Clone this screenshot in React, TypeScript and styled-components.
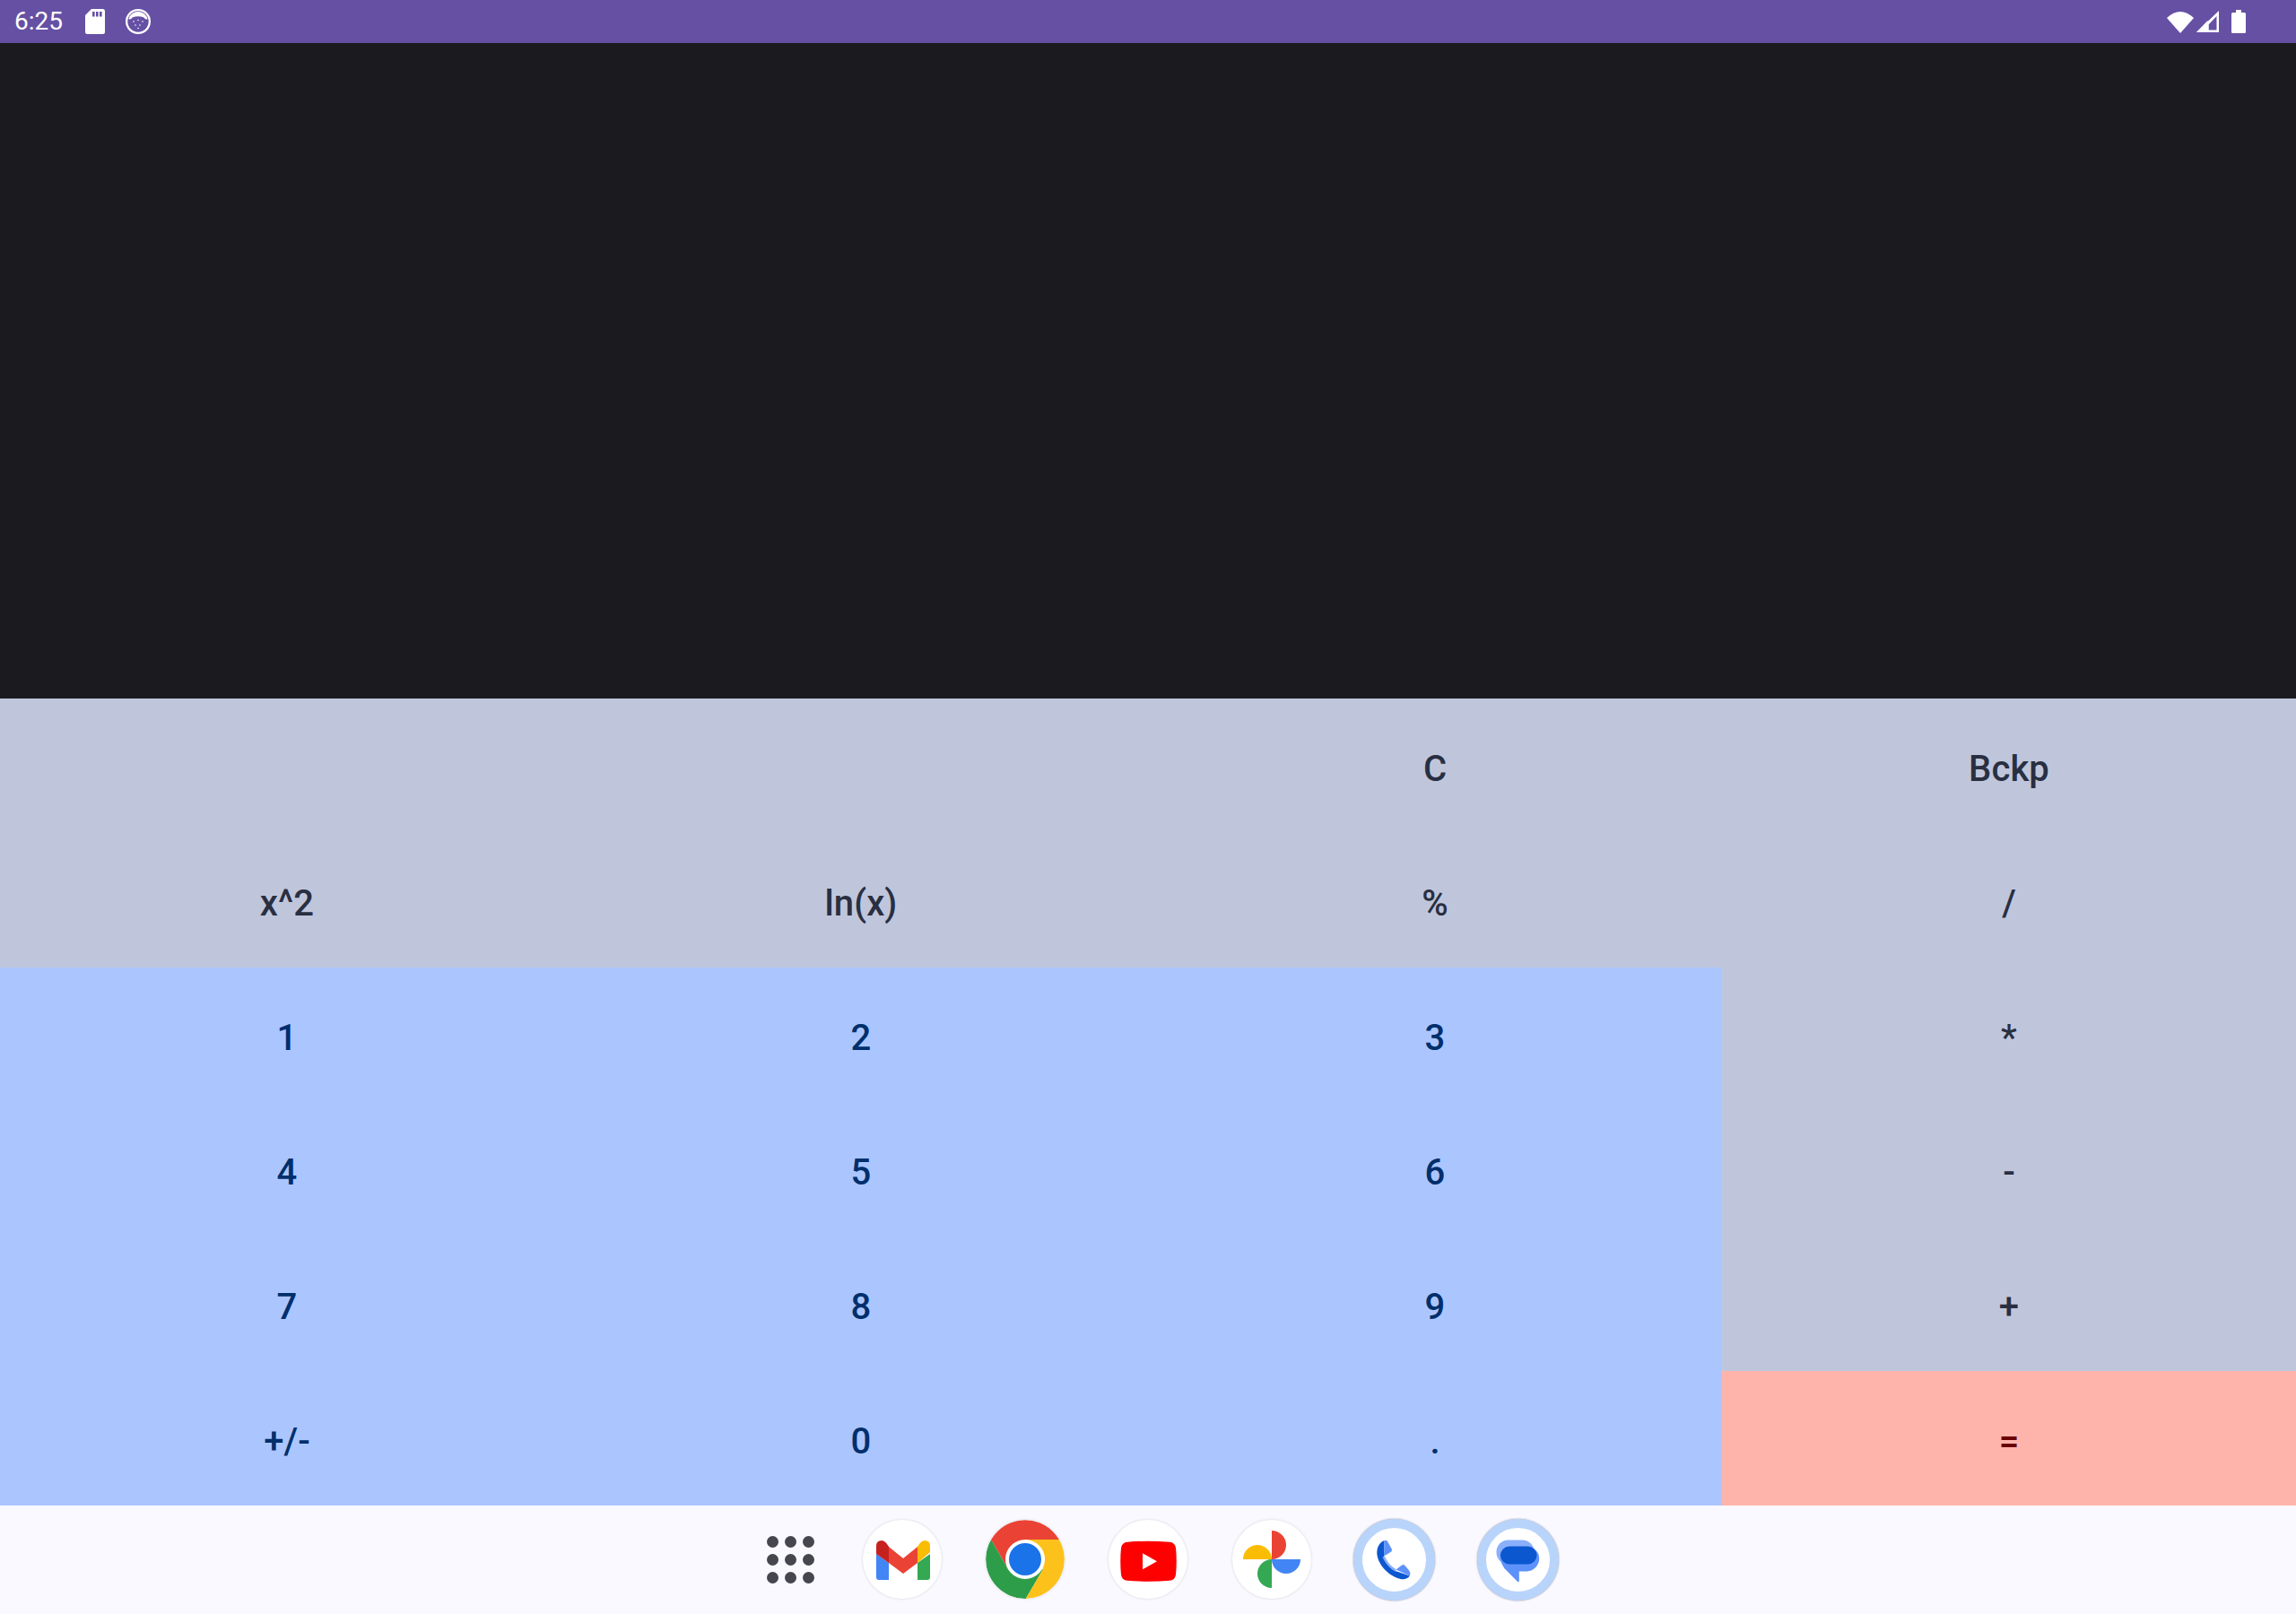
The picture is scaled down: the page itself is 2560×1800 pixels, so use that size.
import styled, { createGlobalStyle } from "styled-components";

type Tone = "muted" | "digit" | "equals";

const tones = {
  muted: { bg: "#bfc6dc", fg: "#292f41" },
  digit: { bg: "#abc6ff", fg: "#002f6c" },
  equals: { bg: "#ffb4ab", fg: "#690005" },
};

const keys: { label: string; tone: Tone }[] = [
  { label: "", tone: "muted" },
  { label: "", tone: "muted" },
  { label: "C", tone: "muted" },
  { label: "Bckp", tone: "muted" },
  { label: "x^2", tone: "muted" },
  { label: "ln(x)", tone: "muted" },
  { label: "%", tone: "muted" },
  { label: "/", tone: "muted" },
  { label: "1", tone: "digit" },
  { label: "2", tone: "digit" },
  { label: "3", tone: "digit" },
  { label: "*", tone: "muted" },
  { label: "4", tone: "digit" },
  { label: "5", tone: "digit" },
  { label: "6", tone: "digit" },
  { label: "-", tone: "muted" },
  { label: "7", tone: "digit" },
  { label: "8", tone: "digit" },
  { label: "9", tone: "digit" },
  { label: "+", tone: "muted" },
  { label: "+/-", tone: "digit" },
  { label: "0", tone: "digit" },
  { label: ".", tone: "digit" },
  { label: "=", tone: "equals" },
];

const GlobalStyle = createGlobalStyle`
  html, body {
    margin: 0;
    padding: 0;
    background: #1b1b1f;
  }
`;

const Page = styled.main`
  width: 2560px;
  height: 1800px;
  display: flex;
  flex-direction: column;
  overflow: hidden;
  font-family: Roboto, "Liberation Sans", sans-serif;
`;

const StatusBar = styled.header`
  height: 48px;
  flex: none;
  display: flex;
  align-items: center;
  justify-content: space-between;
  background: #6650a4;
  color: #fff;
  padding: 0 56px 0 16px;
`;

const StatusGroup = styled.div`
  display: flex;
  align-items: center;
`;

const Clock = styled.span`
  font-size: 28px;
  line-height: 48px;
  width: 79px;
`;

const StatusIcon = styled.svg<{ $gap?: number }>`
  display: block;
  margin-right: ${(props) => props.$gap ?? 0}px;
`;

const Display = styled.section`
  flex: 1;
  background: #1b1b1f;
`;

const Keypad = styled.section`
  flex: none;
  display: grid;
  grid-template-columns: repeat(4, 640px);
  grid-auto-rows: 150px;
`;

const Key = styled.button<{ $tone: Tone }>`
  border: 0;
  padding: 7px 0 0;
  margin: 0;
  font-family: inherit;
  font-size: 40px;
  font-weight: 500;
  letter-spacing: 0.1px;
  background: ${(props) => tones[props.$tone].bg};
  color: ${(props) => tones[props.$tone].fg};
`;

const Dock = styled.nav`
  height: 120px;
  flex: none;
  display: flex;
  align-items: center;
  background: #faf9ff;
  padding: 0 0 1px 825px;
`;

const AppsButton = styled.div`
  width: 112px;
  display: flex;
  justify-content: center;
`;

const AppsGrid = styled.div`
  display: grid;
  grid-template-columns: repeat(3, 13px);
  gap: 7px;
`;

const AppsDot = styled.span`
  width: 13px;
  height: 13px;
  border-radius: 50%;
  background: #46464f;
`;

const DockSlot = styled.div`
  width: 137.3px;
  display: flex;
  justify-content: center;
`;

const AppCircle = styled.div<{ $ringed?: boolean }>`
  box-sizing: border-box;
  width: ${(props) => (props.$ringed ? 91 : 88)}px;
  height: ${(props) => (props.$ringed ? 91 : 88)}px;
  border-radius: 50%;
  background: #fff;
  border: ${(props) => (props.$ringed ? "10px solid #b9d4fb" : "0")};
  box-shadow: ${(props) =>
    props.$ringed ? "0 0 2px rgba(70, 70, 70, 0.55)" : "0 0 3px rgba(0, 0, 0, 0.16)"};
  display: flex;
  align-items: center;
  justify-content: center;
  overflow: hidden;
`;

const AppIcon = styled.svg`
  display: block;
  flex: none;
`;

function Gmail() {
  return (
    <AppIcon width="88" height="88" viewBox="0 0 88 88">
      <path d="M15 38 L29 48 V67 H18 Q15 67 15 64 Z" fill="#4285f4" />
      <path d="M61 48 L75 38 V64 Q75 67 72 67 H61 Z" fill="#34a853" />
      <path d="M29 30 L45 43 L61 30 V48 L45 60 L29 48 Z" fill="#ea4335" />
      <path d="M15 29 Q15 23 21 23 Q25 23 29 30 V48 L15 38 Z" fill="#c5221f" />
      <path d="M61 30 Q65 23 69 23 Q75 23 75 29 V36 L61 48 Z" fill="#fbbc04" />
    </AppIcon>
  );
}

function Chrome() {
  return (
    <AppIcon width="88" height="88" viewBox="0 0 88 88">
      <path d="M6 22 A44 44 0 0 1 82 22 H44 L25 55 Z" fill="#ea4335" />
      <path d="M6 22 A44 44 0 0 0 44.7 88 L64 55 H25 Z" fill="#2d9d4a" />
      <path d="M82 22 A44 44 0 0 1 44.7 88 L64 55 L44 22 Z" fill="#fcc21b" />
      <circle cx="44" cy="44" r="22" fill="#fff" />
      <circle cx="44" cy="44" r="18" fill="#1a73e8" />
    </AppIcon>
  );
}

function YouTube() {
  return (
    <AppIcon width="88" height="88" viewBox="0 0.8 88 88">
      <path
        d="M21 25.5 Q44 23.5 68 25.5 Q74 26 75 32 Q76.5 47 75 62 Q74 68 68 68.5 Q44 70.5 21 68.5 Q15 68 14 62 Q12.5 47 14 32 Q15 26 21 25.5 Z"
        fill="#ff0000"
      />
      <path d="M38 38 L54 47 L38 56 Z" fill="#fff" />
    </AppIcon>
  );
}

function Photos() {
  return (
    <AppIcon width="88" height="88" viewBox="0 0 88 88">
      <path d="M44 44 V12 A16 16 0 0 1 44 44 Z" fill="#ea4335" />
      <path d="M44 44 H12 A16 16 0 0 1 44 44 Z" fill="#fbbc04" />
      <path d="M44 44 V76 A16 16 0 0 1 44 44 Z" fill="#34a853" />
      <path d="M44 44 H76 A16 16 0 0 1 44 44 Z" fill="#4285f4" />
    </AppIcon>
  );
}

function Phone() {
  return (
    <AppIcon width="71" height="71" viewBox="10.5 10.5 71 71">
      <path
        d="M35 24.5 C29 27 26 33 27 41 C29 53 41 65 54 67.7 C58 68.2 61 67 63.3 64 L47.5 58.5 C42 55 37 49 34.5 43 Z"
        fill="#0b57d0"
      />
      <path
        d="M35 24.5 Q37 23.6 38.5 25.5 L43 33.5 Q44.3 36.2 42 37.6 L34.5 42 Z"
        fill="#5e92fb"
      />
      <path d="M33 43 L35.5 42 C38 48 42.5 53.5 48 56.5 L48 59.5 C41 56 36 50 33 43 Z" fill="#8ab0fb" />
      <path
        d="M48 57 L54.5 52 Q56.5 51 58 52.5 L63 58.5 Q64.5 61 63.3 64 Z"
        fill="#5e92fb"
      />
    </AppIcon>
  );
}

function Messages() {
  return (
    <AppIcon width="71" height="71" viewBox="10.5 10.5 71 71">
      <rect x="22" y="24" width="42" height="27" rx="13" fill="#8ab0fb" />
      <path
        d="M38 32 H57 A12.5 12.5 0 0 1 69.7 44.5 A14.5 14.5 0 0 1 56 59 H47.3 V70 Q46.6 71.3 45.4 70.2 L34 58.7 Q26 52 26 40 Z"
        fill="#5e92fb"
      />
      <rect x="26.5" y="31" width="40.5" height="20" rx="10" fill="#0b57d0" />
    </AppIcon>
  );
}

export default function App() {
  return (
    <Page>
      <GlobalStyle />
      <StatusBar>
        <StatusGroup>
          <Clock>6:25</Clock>
          <StatusIcon $gap={23} width="22" height="28" viewBox="0 0 22 28">
            <path
              d="M7 0 H19.5 Q22 0 22 2.5 V25.5 Q22 28 19.5 28 H2.5 Q0 28 0 25.5 V7 Z"
              fill="#fff"
            />
            <rect x="8" y="3" width="2.6" height="5.5" fill="#6650a4" />
            <rect x="12" y="3" width="2.6" height="5.5" fill="#6650a4" />
            <rect x="16" y="3" width="2.6" height="5.5" fill="#6650a4" />
          </StatusIcon>
          <StatusIcon width="28" height="28" viewBox="0 0 28 28">
            <circle cx="14" cy="14" r="14" fill="#fff" />
            <circle cx="14" cy="14" r="11.7" fill="#6650a4" />
            <path d="M3.4 11 A11 11 0 0 1 24.6 11 Q22 12.5 20.5 9.5 Q14 7 7.5 9.5 Q6 12.5 3.4 11 Z" fill="#fff" />
            <circle cx="9" cy="14" r="0.8" fill="#fff" />
            <circle cx="14" cy="12.5" r="0.8" fill="#fff" />
            <circle cx="19" cy="14" r="0.8" fill="#fff" />
            <circle cx="11" cy="18" r="0.8" fill="#fff" />
            <circle cx="16" cy="18" r="0.8" fill="#fff" />
            <circle cx="14" cy="21.5" r="0.8" fill="#fff" />
          </StatusIcon>
        </StatusGroup>
        <StatusGroup>
          <StatusIcon $gap={3} width="30" height="25" viewBox="0 0 30 25">
            <path d="M0 8 Q15 -6 30 8 L15 25 Z" fill="#fff" />
          </StatusIcon>
          <StatusIcon $gap={14} width="25" height="24" viewBox="0 0 25 24">
            <path d="M25 0 V24 H0 Z M22.5 6 L13.5 15.5 V21.5 H22.5 Z" fill="#fff" fillRule="evenodd" />
            <path d="M13.5 11.5 V24 H0 L12 11.5 Z" fill="#fff" />
          </StatusIcon>
          <StatusIcon width="16" height="26" viewBox="0 0 16 26">
            <path
              d="M5 0 H11 V3 H14.5 Q16 3 16 4.5 V24.5 Q16 26 14.5 26 H1.5 Q0 26 0 24.5 V4.5 Q0 3 1.5 3 H5 Z"
              fill="#fff"
            />
          </StatusIcon>
        </StatusGroup>
      </StatusBar>
      <Display />
      <Keypad>
        {keys.map((key, i) => (
          <Key key={i} $tone={key.tone}>
            {key.label}
          </Key>
        ))}
      </Keypad>
      <Dock>
        <AppsButton>
          <AppsGrid>
            {Array.from({ length: 9 }).map((_, i) => (
              <AppsDot key={i} />
            ))}
          </AppsGrid>
        </AppsButton>
        <DockSlot>
          <AppCircle>
            <Gmail />
          </AppCircle>
        </DockSlot>
        <DockSlot>
          <AppCircle>
            <Chrome />
          </AppCircle>
        </DockSlot>
        <DockSlot>
          <AppCircle>
            <YouTube />
          </AppCircle>
        </DockSlot>
        <DockSlot>
          <AppCircle>
            <Photos />
          </AppCircle>
        </DockSlot>
        <DockSlot>
          <AppCircle $ringed>
            <Phone />
          </AppCircle>
        </DockSlot>
        <DockSlot>
          <AppCircle $ringed>
            <Messages />
          </AppCircle>
        </DockSlot>
      </Dock>
    </Page>
  );
}
